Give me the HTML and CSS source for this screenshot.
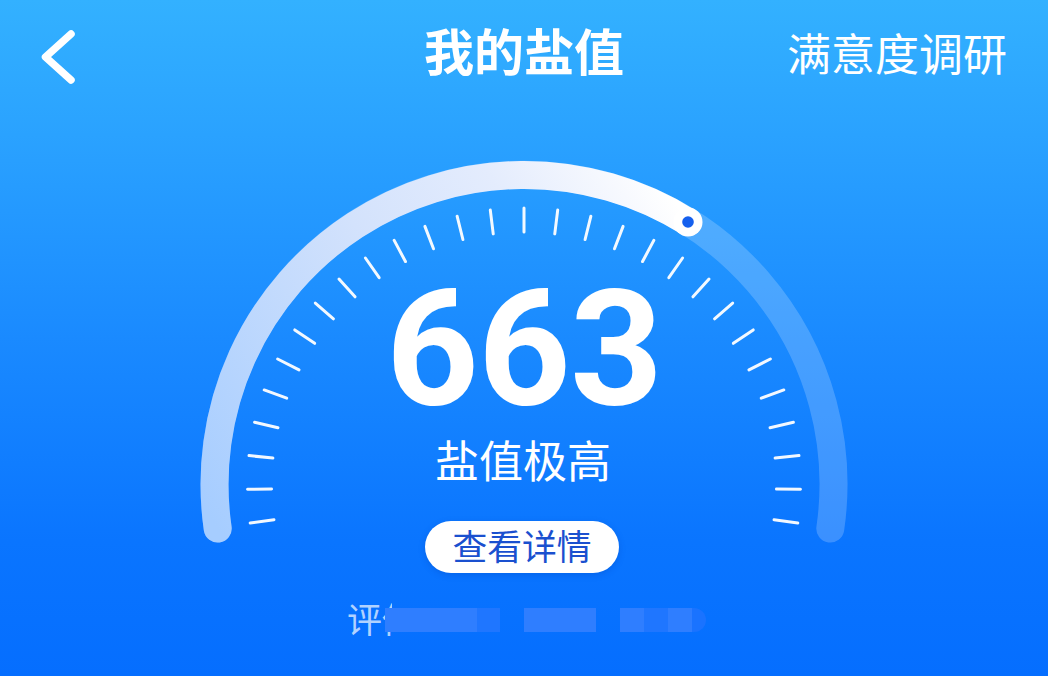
FILE: index.html
```html
<!DOCTYPE html>
<html lang="zh-CN">
<head>
<meta charset="utf-8">
<title>我的盐值</title>
<link rel="stylesheet" href="styles.css">
</head>
<body>
<div class="page">
  <header class="nav">
    <svg class="back" viewBox="0 0 40 60" aria-label="返回"><path d="M30 7 L4.5 30 L30 53" /></svg>
    <h1 class="title">我的盐值</h1>
    <a class="survey">满意度调研</a>
  </header>
  <main class="stage">
    <svg class="gauge" viewBox="0 110 1048 566">
      <defs>
        <linearGradient id="prog" gradientUnits="userSpaceOnUse" x1="218" y1="529" x2="688" y2="222">
          <stop offset="0" stop-color="#a6cdff"/>
          <stop offset="0.5" stop-color="#d3e2fc"/>
          <stop offset="0.75" stop-color="#e4ecfd"/>
          <stop offset="0.93" stop-color="#f7f9fe"/>
          <stop offset="1" stop-color="#ffffff"/>
        </linearGradient>
      </defs>
      <path class="track" d="M217.7 528.6 A309.5 309.5 0 1 1 830.3 528.6"/>
      <path class="progress" d="M217.7 528.6 A309.5 309.5 0 0 1 688 222"/>
      <circle class="knob" cx="688" cy="222" r="14.5"/>
      <circle class="dot" cx="688" cy="222" r="5.8"/>
      <g class="ticks">
        <line x1="524" y1="208" x2="524" y2="232" transform="rotate(-98 524 484.5)"/>
        <line x1="524" y1="208" x2="524" y2="232" transform="rotate(-91 524 484.5)"/>
        <line x1="524" y1="208" x2="524" y2="232" transform="rotate(-84 524 484.5)"/>
        <line x1="524" y1="208" x2="524" y2="232" transform="rotate(-77 524 484.5)"/>
        <line x1="524" y1="208" x2="524" y2="232" transform="rotate(-70 524 484.5)"/>
        <line x1="524" y1="208" x2="524" y2="232" transform="rotate(-63 524 484.5)"/>
        <line x1="524" y1="208" x2="524" y2="232" transform="rotate(-56 524 484.5)"/>
        <line x1="524" y1="208" x2="524" y2="232" transform="rotate(-49 524 484.5)"/>
        <line x1="524" y1="208" x2="524" y2="232" transform="rotate(-42 524 484.5)"/>
        <line x1="524" y1="208" x2="524" y2="232" transform="rotate(-35 524 484.5)"/>
        <line x1="524" y1="208" x2="524" y2="232" transform="rotate(-28 524 484.5)"/>
        <line x1="524" y1="208" x2="524" y2="232" transform="rotate(-21 524 484.5)"/>
        <line x1="524" y1="208" x2="524" y2="232" transform="rotate(-14 524 484.5)"/>
        <line x1="524" y1="208" x2="524" y2="232" transform="rotate(-7 524 484.5)"/>
        <line x1="524" y1="208" x2="524" y2="232"/>
        <line x1="524" y1="208" x2="524" y2="232" transform="rotate(7 524 484.5)"/>
        <line x1="524" y1="208" x2="524" y2="232" transform="rotate(14 524 484.5)"/>
        <line x1="524" y1="208" x2="524" y2="232" transform="rotate(21 524 484.5)"/>
        <line x1="524" y1="208" x2="524" y2="232" transform="rotate(28 524 484.5)"/>
        <line x1="524" y1="208" x2="524" y2="232" transform="rotate(35 524 484.5)"/>
        <line x1="524" y1="208" x2="524" y2="232" transform="rotate(42 524 484.5)"/>
        <line x1="524" y1="208" x2="524" y2="232" transform="rotate(49 524 484.5)"/>
        <line x1="524" y1="208" x2="524" y2="232" transform="rotate(56 524 484.5)"/>
        <line x1="524" y1="208" x2="524" y2="232" transform="rotate(63 524 484.5)"/>
        <line x1="524" y1="208" x2="524" y2="232" transform="rotate(70 524 484.5)"/>
        <line x1="524" y1="208" x2="524" y2="232" transform="rotate(77 524 484.5)"/>
        <line x1="524" y1="208" x2="524" y2="232" transform="rotate(84 524 484.5)"/>
        <line x1="524" y1="208" x2="524" y2="232" transform="rotate(91 524 484.5)"/>
        <line x1="524" y1="208" x2="524" y2="232" transform="rotate(98 524 484.5)"/>
      </g>
    </svg>
    <section class="readout">
      <div class="score">663</div>
      <div class="level">盐值极高</div>
      <a class="details">查看详情</a>
      <div class="note">
        <span class="note-text">评估</span>
        <span class="mask m1"></span><span class="mask m2"></span>
        <span class="mask m3"></span>
        <span class="mask m4"></span><span class="mask m5"></span><span class="mask m6"></span><span class="mask m7"></span>
      </div>
    </section>
  </main>
</div>
</body>
</html>
```
FILE: styles.css
```css
* { box-sizing: border-box; }
html, body { margin: 0; padding: 0; }
body { width: 1048px; height: 676px; overflow: hidden; font-family: "Noto Sans CJK SC", "Noto Sans", sans-serif; }
.page {
  width: 1048px; height: 676px;
  display: flex; flex-direction: column;
  background: linear-gradient(180deg, #33b1ff 0%, #2aa2ff 20%, #1a8aff 50%, #0a75ff 80%, #056eff 100%);
  color: #fff;
}
.nav {
  height: 110px; flex: none;
  display: grid; grid-template-columns: 1fr auto 1fr; align-items: start;
  padding: 0 41px;
}
.back { width: 40px; height: 60px; margin-top: 27px; }
.back path { fill: none; stroke: #fff; stroke-width: 7.5; stroke-linecap: round; stroke-linejoin: round; }
.title { margin: 15px 0 0; font-size: 50px; line-height: 68px; font-weight: 700; }
.survey { justify-self: end; margin-top: 21px; font-size: 44px; line-height: 62px; font-weight: 400; white-space: nowrap; }
.stage { flex: 1; display: grid; }
.gauge { grid-area: 1 / 1; width: 1048px; height: 566px; display: block; }
.track { fill: none; stroke: rgba(255,255,255,.2); stroke-width: 28; stroke-linecap: round; }
.progress { fill: none; stroke: url(#prog); stroke-width: 28; stroke-linecap: round; }
.knob { fill: #fff; }
.dot { fill: #1560ee; }
.ticks line { stroke: #fff; stroke-width: 3; stroke-linecap: round; opacity: .95; }
.readout { grid-area: 1 / 1; display: flex; flex-direction: column; align-items: center; padding-top: 164px; }
.score { font-family: Roboto, "Liberation Sans", sans-serif; font-weight: 700; font-size: 162px; line-height: 150px; letter-spacing: -1px; }
.level { font-size: 44px; line-height: 60px; margin-top: 5px; margin-right: 2px; }
.details {
  margin-top: 32px; margin-right: 4px; width: 194px; height: 52px; border-radius: 26px;
  background: #fff; color: #1a50cf; padding-bottom: 4px;
  display: flex; align-items: center; justify-content: center;
  font-size: 34.8px; box-shadow: 0 2px 6px rgba(0,60,170,.25);
}
.note { width: 1048px; display: flex; align-items: center; height: 50px; margin-top: 22px; padding-left: 347px; }
.note-text { font-size: 35px; line-height: 50px; margin-top: -4px; color: rgba(255,255,255,.7); width: 45px; overflow: hidden; white-space: nowrap; margin-right: -7px; }
.mask { height: 24px; flex: none; }
.m1 { width: 92px; background: #2f7eff; }
.m2 { width: 23px; background: #1f76ff; margin-right: 24px; }
.m3 { width: 72px; background: #2f7eff; margin-right: 24px; }
.m4 { width: 24px; background: #2f7eff; }
.m5 { width: 24px; background: #1f76ff; }
.m6 { width: 24px; background: #2f7eff; }
.m7 { width: 14px; background: #1a73ff; border-radius: 0 12px 12px 0; }
```
